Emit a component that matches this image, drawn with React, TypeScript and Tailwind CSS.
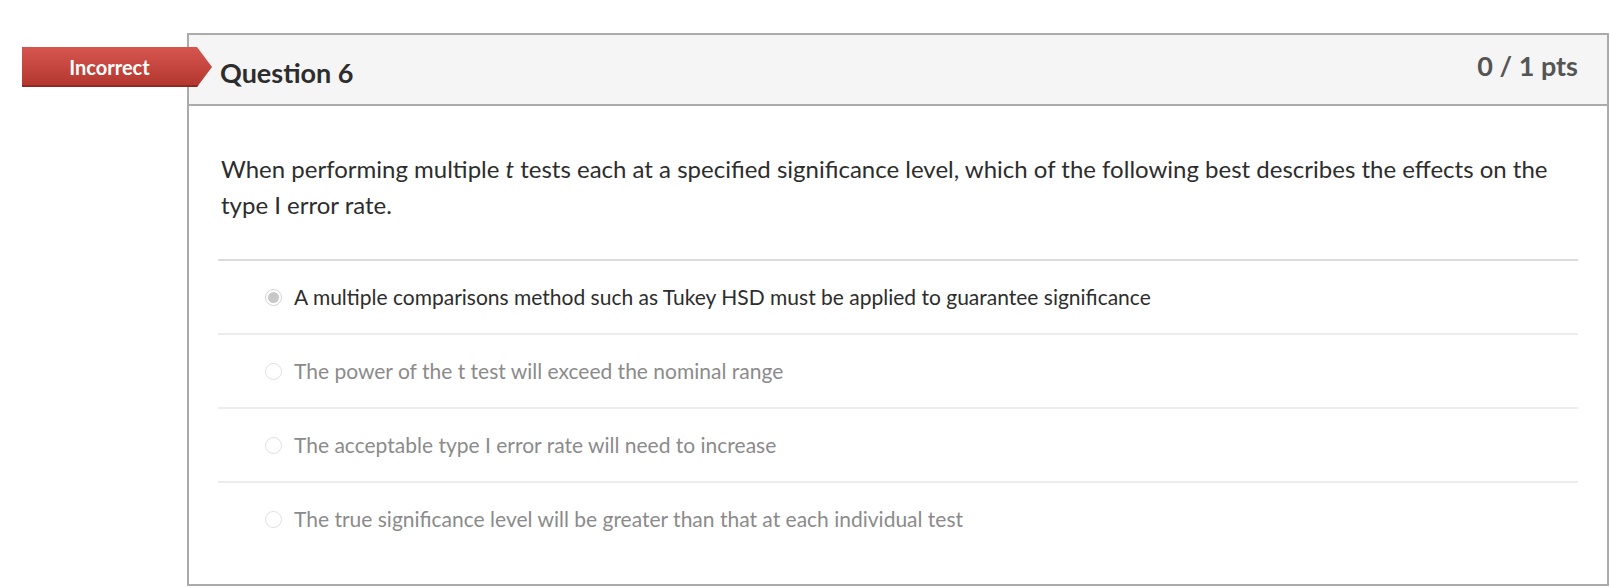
import React from 'react'

type Answer = { text: string; selected?: boolean }

const answers: Answer[] = [
  { text: 'A multiple comparisons method such as Tukey HSD must be applied to guarantee significance', selected: true },
  { text: 'The power of the t test will exceed the nominal range' },
  { text: 'The acceptable type I error rate will need to increase' },
  { text: 'The true significance level will be greater than that at each individual test' },
]

function Radio({ selected }: { selected?: boolean }) {
  if (selected) {
    return (
      <span className="flex size-[17px] shrink-0 items-center justify-center rounded-full border-[1.5px] border-[#d3d3d3] bg-white">
        <span className="size-[11px] rounded-full bg-[#c8c8c8]" />
      </span>
    )
  }
  return <span className="size-[17px] shrink-0 rounded-full border-[1.5px] border-[#e0e0e0] bg-white" />
}

export default function App() {
  return (
    <div className="min-h-screen bg-white pt-[33px] pl-[187px] pr-px font-['Lato',sans-serif]">
      <div className="relative border-2 border-[#ababab]">
        {/* Incorrect badge, sits over the left border */}
        <div
          className="absolute left-[-167px] top-[12px] flex h-[40px] w-[190px] items-center bg-gradient-to-b from-[#d6564e] to-[#b2362e] shadow-[inset_0_-2px_0_#8f2a23]"
          style={{ clipPath: 'polygon(0 0, 175px 0, 190px 50%, 175px 100%, 0 100%)' }}
        >
          <span className="w-[175px] text-center text-[20px] font-bold text-white">Incorrect</span>
        </div>

        <div className="flex h-[71px] items-start justify-between border-b-2 border-[#ababab] bg-[#f5f5f5] pl-[31px] pr-[29px]">
          <span className="mt-[24px] text-[27px] font-bold leading-[27px] text-[#2d2d2d]">Question 6</span>
          <span className="mt-[17px] text-[27px] font-bold leading-[27px] text-[#555]">0 / 1 pts</span>
        </div>

        <div className="px-[29px] pb-[29px]">
          <p className="pt-[45px] pl-[3px] pr-[14px] text-[24px] leading-[36px] text-[#2d2d2d]">
            When performing multiple <i>t</i> tests each at a specified significance level, which of the following best describes the effects on the type I error rate.
          </p>
          <div className="mt-[36px] border-t-2 border-[#dcdcdc]">
            {answers.map((a, i) => (
              <div
                key={i}
                className={
                  i === 0
                    ? 'flex h-[72px] items-center gap-[12px] pl-[47px]'
                    : 'flex h-[74px] items-center gap-[12px] border-t-2 border-[#ededed] pl-[47px]'
                }
              >
                <Radio selected={a.selected} />
                <span className={a.selected ? 'text-[21px] text-[#2d2d2d]' : 'text-[21px] text-[#8b8b8b]'}>
                  {a.text}
                </span>
              </div>
            ))}
          </div>
        </div>
      </div>
    </div>
  )
}
